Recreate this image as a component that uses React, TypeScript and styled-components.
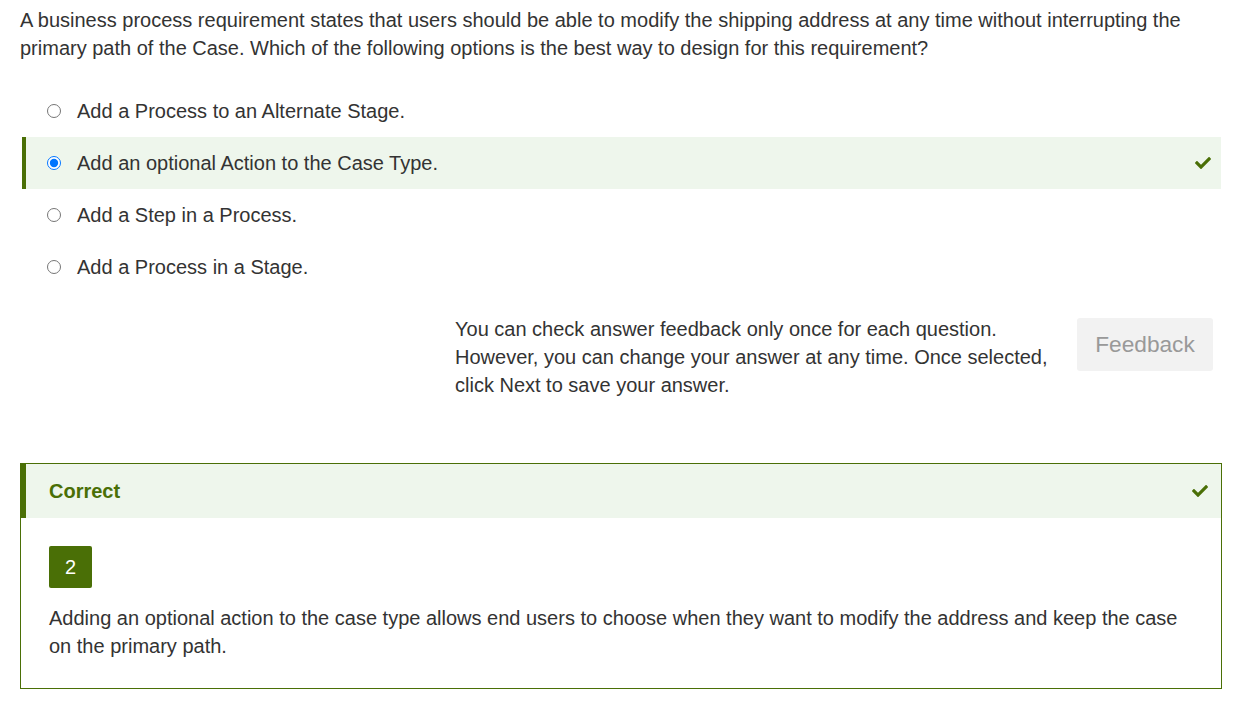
import React from "react";
import styled, { createGlobalStyle } from "styled-components";
import { FaCheck } from "react-icons/fa";

const GREEN = "#4a6f06";
const LIGHT = "#eef6ec";

const Global = createGlobalStyle`
  html, body { margin: 0; padding: 0; background: #fff; }
  body { font-family: "Liberation Sans", Arial, sans-serif; color: #333; }
`;

const Page = styled.div`
  width: 1202px;
  padding: 6px 23px 16px 20px;
`;

const Question = styled.p`
  margin: 0;
  font-size: 20px;
  line-height: 28px;
`;

const Options = styled.div`
  margin: 23px 1px 0 2px;
  display: flex;
  flex-direction: column;
`;

const Option = styled.label<{ $selected?: boolean }>`
  display: flex;
  align-items: center;
  height: 52px;
  padding: 0 10px 0 21px;
  border-left: 4px solid ${(p) => (p.$selected ? GREEN : "transparent")};
  background: ${(p) => (p.$selected ? LIGHT : "transparent")};
  font-size: 20px;
`;

const Radio = styled.input`
  width: 14px;
  height: 14px;
  margin: 0 16px 0 0;
`;

const OptionText = styled.span`
  flex: 1;
`;

const Check = styled(FaCheck)`
  color: ${GREEN};
  font-size: 16px;
`;

const FeedbackRow = styled.div`
  display: flex;
  justify-content: flex-end;
  align-items: flex-start;
  gap: 22px;
  margin-top: 22px;
  padding-right: 9px;
`;

const Notice = styled.p`
  margin: 0;
  width: 600px;
  font-size: 20px;
  line-height: 28px;
`;

const FeedbackButton = styled.button`
  margin-top: 3px;
  width: 136px;
  height: 53px;
  border: none;
  border-radius: 3px;
  background: #f2f2f2;
  color: #999;
  font-family: "Liberation Sans", Arial, sans-serif;
  font-size: 22.7px;
`;

const ResultBox = styled.section`
  margin-top: 64px;
  border: 1px solid ${GREEN};
`;

const ResultHeader = styled.div`
  display: flex;
  align-items: center;
  justify-content: space-between;
  height: 54px;
  padding: 0 13px 0 23px;
  border-left: 5px solid ${GREEN};
  background: ${LIGHT};
`;

const ResultTitle = styled.span`
  color: ${GREEN};
  font-weight: bold;
  font-size: 20px;
`;

const ResultBody = styled.div`
  padding: 28px 27px 28px 28px;
  display: flex;
  flex-direction: column;
  align-items: flex-start;
  gap: 16px;
`;

const Badge = styled.div`
  width: 43px;
  height: 42px;
  display: flex;
  align-items: center;
  justify-content: center;
  background: ${GREEN};
  color: #fff;
  border-radius: 2px;
  font-size: 20px;
`;

const Explanation = styled.p`
  margin: 0;
  font-size: 20px;
  line-height: 28px;
`;

const options = [
  "Add a Process to an Alternate Stage.",
  "Add an optional Action to the Case Type.",
  "Add a Step in a Process.",
  "Add a Process in a Stage.",
];

export default function App() {
  return (
    <>
      <Global />
      <Page>
        <Question>
          A business process requirement states that users should be able to modify the shipping address at any
          time without interrupting the primary path of the Case. Which of the following options is the best way
          to design for this requirement?
        </Question>
        <Options>
          {options.map((o, i) => (
            <Option key={o} $selected={i === 1}>
              <Radio type="radio" name="q" checked={i === 1} readOnly />
              <OptionText>{o}</OptionText>
              {i === 1 && <Check />}
            </Option>
          ))}
        </Options>
        <FeedbackRow>
          <Notice>
            You can check answer feedback only once for each question. However, you can change your answer at any
            time. Once selected, click Next to save your answer.
          </Notice>
          <FeedbackButton disabled>Feedback</FeedbackButton>
        </FeedbackRow>
        <ResultBox>
          <ResultHeader>
            <ResultTitle>Correct</ResultTitle>
            <Check />
          </ResultHeader>
          <ResultBody>
            <Badge>2</Badge>
            <Explanation>
              Adding an optional action to the case type allows end users to choose when they want to modify the
              address and keep the case on the primary path.
            </Explanation>
          </ResultBody>
        </ResultBox>
      </Page>
    </>
  );
}
